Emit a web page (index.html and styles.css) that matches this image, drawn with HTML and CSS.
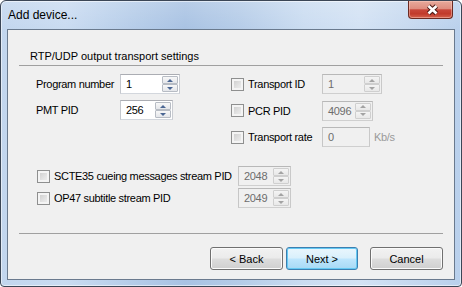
FILE: index.html
```html
<!DOCTYPE html>
<html>
<head>
<meta charset="utf-8">
<link rel="stylesheet" href="styles.css">
</head>
<body>
<div class="window">
  <div class="titlebar">
    <span class="title">Add device...</span>
    <div class="close">
      <svg width="45" height="18" viewBox="0 0 45 18">
        <path d="M20.5 6 L28.5 13.5 M28.5 6 L20.5 13.5" stroke="#4a1a14" stroke-width="4.6" fill="none"/>
        <path d="M20.5 6 L28.5 13.5 M28.5 6 L20.5 13.5" stroke="#ffffff" stroke-width="2.6" fill="none"/>
      </svg>
    </div>
  </div>
  <div class="client">
    <div class="group-title">RTP/UDP output transport settings</div>
    <div class="rule"></div>
    <div class="fields">
      <div class="col col-left">
        <div class="row">
          <span class="lbl">Program number</span>
          <div class="spin w60"><span class="val">1</span><span class="arrows"><span class="ab"><i class="up"></i></span><span class="ab"><i class="dn"></i></span></span></div>
        </div>
        <div class="row">
          <span class="lbl">PMT PID</span>
          <div class="spin w53"><span class="val">256</span><span class="arrows"><span class="ab"><i class="up"></i></span><span class="ab"><i class="dn"></i></span></span></div>
        </div>
      </div>
      <div class="col col-right">
        <div class="row">
          <span class="chk-lbl"><span class="chk"></span>Transport ID</span>
          <div class="spin dis w60"><span class="val">1</span><span class="arrows"><span class="ab"><i class="up"></i></span><span class="ab"><i class="dn"></i></span></span></div>
        </div>
        <div class="row">
          <span class="chk-lbl"><span class="chk"></span>PCR PID</span>
          <div class="spin dis w51"><span class="val">4096</span><span class="arrows"><span class="ab"><i class="up"></i></span><span class="ab"><i class="dn"></i></span></span></div>
        </div>
        <div class="row">
          <span class="chk-lbl"><span class="chk"></span>Transport rate</span>
          <div class="spin dis w48"><span class="val">0</span></div>
          <span class="unit">Kb/s</span>
        </div>
      </div>
    </div>
    <div class="extra">
      <div class="row">
        <span class="chk-lbl wide"><span class="chk"></span>SCTE35 cueing messages stream PID</span>
        <div class="spin dis w53"><span class="val">2048</span><span class="arrows"><span class="ab"><i class="up"></i></span><span class="ab"><i class="dn"></i></span></span></div>
      </div>
      <div class="row">
        <span class="chk-lbl wide"><span class="chk"></span>OP47 subtitle stream PID</span>
        <div class="spin dis w53"><span class="val">2049</span><span class="arrows"><span class="ab"><i class="up"></i></span><span class="ab"><i class="dn"></i></span></span></div>
      </div>
    </div>
    <div class="rule rule-bottom"></div>
    <div class="buttons">
      <div class="btn btn-back">&lt; Back</div>
      <div class="btn btn-next">Next &gt;</div>
      <div class="btn btn-cancel">Cancel</div>
    </div>
  </div>
</div>
</body>
</html>
```
FILE: styles.css
```css
html, body {
  margin: 0;
  padding: 0;
  background: #ffffff;
}
body {
  font-family: "Liberation Sans", Arial, sans-serif;
  font-size: 11px;
  color: #000;
  letter-spacing: -0.32px;
}
.window {
  width: 462px;
  height: 287px;
  box-sizing: border-box;
  border: 1px solid #3b4656;
  border-radius: 6px 6px 4px 4px;
  padding: 0 6px 6px 6px;
  display: flex;
  flex-direction: column;
  background:
    linear-gradient(to bottom, rgba(255,255,255,0.18), rgba(255,255,255,0) 30px),
    linear-gradient(to right, #c2d6ee 0%, #c9dbf1 14%, #b6cde9 28%, #a8c2e3 40%, #b5cce8 52%, #cadcf1 66%, #d3e2f4 78%, #c5d8ef 90%, #b9d0ec 100%);
  box-shadow: inset 0 0 0 1px rgba(255,255,255,0.55);
}
.titlebar {
  height: 28px;
  display: flex;
  align-items: flex-start;
}
.title {
  font-size: 12px;
  letter-spacing: 0;
  line-height: 14px;
  padding-top: 7px;
  margin-left: 1px;
  color: #000;
}
.close {
  margin-left: auto;
  margin-right: 2px;
  width: 45px;
  height: 18px;
  box-sizing: border-box;
  border: 1px solid #6b2a22;
  border-top: none;
  border-radius: 0 0 4px 4px;
  background: linear-gradient(to bottom, #e7aa9c 0%, #de8d7f 45%, #c8473a 52%, #c13a2b 75%, #d5624d 100%);
  box-shadow: inset 0 0 0 1px rgba(255,210,200,0.45);
  overflow: hidden;
}
.close svg { display: block; margin: -1px 0 0 -1px; }
.client {
  flex: 1;
  box-sizing: border-box;
  border: 1px solid #6a7a8e;
  background: #f0f0f0;
  padding: 19px 11px 0 11px;
  display: flex;
  flex-direction: column;
}
.group-title {
  line-height: 14px;
  height: 14px;
  padding-left: 11px;
  letter-spacing: 0;
  margin-bottom: 2px;
}
.rule {
  height: 1px;
  background: #a0a0a0;
}
.fields {
  display: flex;
  margin-top: 8px;
}
.col {
  display: flex;
  flex-direction: column;
  gap: 6px;
}
.col-left {
  width: 212px;
  box-sizing: border-box;
  padding-left: 17px;
}
.col-right {
  gap: 6.5px;
}
.row {
  display: flex;
  align-items: center;
  height: 20px;
  line-height: 14px;
}
.lbl {
  width: 84px;
}
.chk-lbl {
  width: 91px;
  display: flex;
  align-items: center;
}
.chk-lbl.wide {
  width: 201px;
}
.chk {
  width: 13px;
  height: 13px;
  box-sizing: border-box;
  border: 1px solid #8e8f8f;
  background: linear-gradient(135deg, #c9c9c9 0%, #e4e4e4 60%, #f1f1f1 100%);
  box-shadow: inset 0 0 0 2px #f4f4f4;
  margin-right: 4px;
  flex: none;
}
.spin {
  display: flex;
  height: 20px;
  box-sizing: border-box;
  border: 1px solid #abadb3;
  border-color: #abadb3 #c9ccd2 #d3d7dd #c5c8ce;
  background: #fff;
}
.w60 { width: 60px; }
.w53 { width: 53px; }
.w51 { width: 51px; }
.w48 { width: 48px; }
.val {
  flex: 1;
  padding-left: 5px;
  line-height: 18px;
}
.arrows {
  width: 16px;
  display: flex;
  flex-direction: column;
  padding: 1px 1px 1px 0;
}
.ab {
  flex: 1;
  box-sizing: border-box;
  border: 1px solid #b7bcc4;
  border-radius: 1px;
  background: linear-gradient(to bottom, #f8f8f8, #e4e6ea);
  display: flex;
  align-items: center;
  justify-content: center;
}
.up {
  width: 0; height: 0;
  border-left: 3px solid transparent;
  border-right: 3px solid transparent;
  border-bottom: 3px solid #4a6693;
}
.dn {
  width: 0; height: 0;
  border-left: 3px solid transparent;
  border-right: 3px solid transparent;
  border-top: 3px solid #4a6693;
}
.spin.dis {
  background: #f0f0f0;
  border-color: #b8b8b8 #c9c9c9 #cfcfcf #c6c6c6;
  color: #6d6d6d;
}
.spin.dis .ab {
  border-color: #cfcfcf;
  background: linear-gradient(to bottom, #f4f4f4, #e8e8e8);
}
.spin.dis .up { border-bottom-color: #a3a3a3; }
.spin.dis .dn { border-top-color: #a3a3a3; }
.unit {
  margin-left: 4px;
  color: #9a9a9a;
}
.extra {
  display: flex;
  flex-direction: column;
  gap: 2px;
  margin-top: 19px;
  padding-left: 18px;
}
.rule-bottom {
  margin-top: 25px;
}
.buttons {
  display: flex;
  justify-content: flex-end;
  margin-top: 13px;
}
.btn {
  height: 23px;
  box-sizing: border-box;
  border: 1px solid #707070;
  border-radius: 3px;
  background: linear-gradient(to bottom, #f2f2f2 0%, #ebebeb 48%, #dddddd 52%, #cfcfcf 100%);
  box-shadow: inset 0 0 0 1px #fbfbfb;
  display: flex;
  align-items: center;
  justify-content: center;
  letter-spacing: 0;
}
.btn-back { width: 73px; }
.btn-next {
  width: 72px;
  margin-left: 3px;
  border-color: #3c7fb1;
  background: linear-gradient(to bottom, #eaf6fd 0%, #d9f0fc 48%, #bee6fd 52%, #a7d9f5 100%);
  box-shadow: inset 0 0 0 1px #65c9f3;
}
.btn-cancel {
  width: 73px;
  margin-left: 12px;
}
```
